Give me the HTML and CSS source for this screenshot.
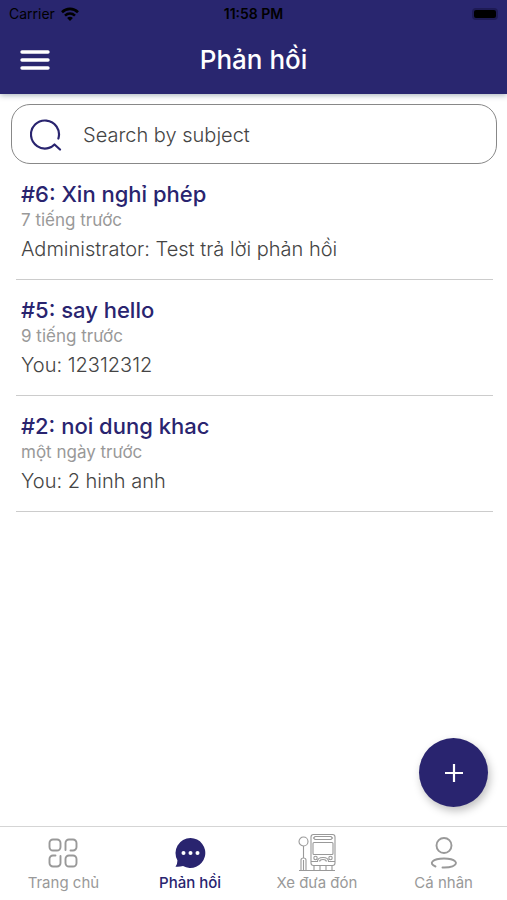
FILE: index.html
```html
<!DOCTYPE html>
<html lang="vi">
<head>
<meta charset="utf-8">
<meta name="viewport" content="width=device-width, initial-scale=1">
<title>Phản hồi</title>
<link rel="stylesheet" href="styles.css">
</head>
<body>
<header class="header">
  <div class="status">
    <span class="carrier">Carrier
      <svg width="18" height="14" viewBox="0 0 18 14" fill="none" stroke="#000" stroke-width="2.6" aria-hidden="true"><path d="M1 5.2C5.5.8 12.500.8 17 5.200M4 8.600c3-2.700 7-2.700 10 0"/><path d="M9 14L6.100 10.900c1.700-1.400 4.100-1.400 5.800 0z" fill="#000" stroke="none"/></svg>
    </span>
    <span class="clock">11:58 PM</span>
    <span class="battery"></span>
  </div>
  <div class="nav">
    <button class="menu" aria-label="Menu">
      <svg width="30" height="22" viewBox="0 0 30 22" stroke="#fff" stroke-width="3.400" stroke-linecap="round" aria-hidden="true"><path d="M2 3h26M2 11h26M2 19h26"/></svg>
    </button>
    <h1 class="title">Phản hồi</h1>
  </div>
</header>
<main class="content">
  <label class="search">
    <svg width="32" height="32" viewBox="0 0 32 32" fill="none" stroke="#29246f" stroke-width="2.200" stroke-linecap="round" stroke-linejoin="round" aria-hidden="true"><path d="M28.400 19.500A14 14 0 1 0 19 28.900Q22 28 24.500 25.500L30 30.500"/></svg>
    <input class="search-input" type="text" placeholder="Search by subject" aria-label="Search by subject">
  </label>
  <ul class="list">
    <li class="item">
      <h2 class="subject">#6: Xin nghỉ phép</h2>
      <p class="time">7 tiếng trước</p>
      <p class="message">Administrator: Test trả lời phản hồi</p>
    </li>
    <li class="item">
      <h2 class="subject">#5: say hello</h2>
      <p class="time">9 tiếng trước</p>
      <p class="message">You: 12312312</p>
    </li>
    <li class="item">
      <h2 class="subject">#2: noi dung khac</h2>
      <p class="time">một ngày trước</p>
      <p class="message">You: 2 hinh anh</p>
    </li>
  </ul>
</main>
<button class="add" aria-label="Thêm">
  <svg width="18" height="18" viewBox="0 0 18 18" stroke="#fff" stroke-width="2.200" aria-hidden="true"><path d="M9 0v18M0 9h18"/></svg>
</button>
<nav class="tabs">
  <a class="tab" href="#home">
    <svg width="40" height="40" viewBox="0 0 40 40" fill="none" stroke="#999" stroke-width="1.900" stroke-linecap="round" aria-hidden="true"><rect x="6.500" y="6.500" width="11" height="11" rx="3.500"/><path d="M22.500 17V10a3.500 3.500 0 0 1 3.500-3.500h4a3.500 3.500 0 0 1 3.500 3.500v4a3.500 3.500 0 0 1-3.500 3.500h-2.500"/><path d="M17.500 23v7a3.500 3.500 0 0 1-3.500 3.500h-4a3.500 3.500 0 0 1-3.500-3.500v-4a3.500 3.500 0 0 1 3.500-3.500h2.500"/><rect x="22.500" y="22.500" width="11" height="11" rx="3.500"/></svg>
    <span>Trang chủ</span>
  </a>
  <a class="tab active" href="#feedback" aria-current="page">
    <svg width="40" height="40" viewBox="0 0 40 40" fill="#29246f" aria-hidden="true"><path d="M20.500 5A15 15 0 1 1 13 33.100Q9.800 34 5.500 33.700Q7.500 31.500 7.400 27.300A15 15 0 0 1 20.500 5z"/><g fill="#fff"><circle cx="13.500" cy="20" r="2"/><circle cx="20.500" cy="20" r="2"/><circle cx="27.500" cy="20" r="2"/></g></svg>
    <span>Phản hồi</span>
  </a>
  <a class="tab" href="#bus">
    <svg width="40" height="40" viewBox="0 0 40 40" fill="none" stroke="#999" stroke-width="1.100" aria-hidden="true"><circle cx="6.500" cy="8.500" r="4.500"/><path d="M6.500 13v12M4 37V27q0-2 2.500-2t2.500 2v10M6.500 27v10M2 37.500h36"/><rect x="14" y="1.500" width="24" height="31" rx="2.500"/><path d="M17 9.500h18q1 0 1 1v10q0 1-1 1H17q-1 0-1-1v-10q0-1 1-1zM18 3.500h16l1.500 1.500L34 6.500H18L16.500 5zM14 28.500h6.500q0-4 5.500-4t5.500 4H38M22.500 28.500q.500-2 3.500-2t3.500 2M17 32.500v5M23 32.500v5M29 32.500v5M35 32.500v5"/><circle cx="18.500" cy="25" r="1.700"/><circle cx="33.500" cy="25" r="1.700"/></svg>
    <span>Xe đưa đón</span>
  </a>
  <a class="tab" href="#profile">
    <svg width="40" height="40" viewBox="0 0 40 40" fill="none" stroke="#999" stroke-width="1.900" stroke-linecap="round" aria-hidden="true"><circle cx="20" cy="12.500" r="7.500"/><path d="M11.500 33.500C4 30.500 8.500 25.500 20 25.500s15.500 5 8.500 7.800Q25 34.700 18.500 34.500"/></svg>
    <span>Cá nhân</span>
  </a>
</nav>
</body>
</html>
```
FILE: styles.css
```css
* { box-sizing: border-box; }

body {
  margin: 0;
  min-height: 100vh;
  display: flex;
  flex-direction: column;
  background: #fff;
  font-family: Inter, "Liberation Sans", sans-serif;
  color: #444;
}

h1, h2, p, ul { margin: 0; padding: 0; }
button { border: 0; padding: 0; cursor: pointer; }
svg { display: block; flex: none; }

.header {
  background: #29266f;
  color: #fff;
  box-shadow: 0 1px 6px rgba(20, 50, 70, 0.4);
}

.status {
  display: grid;
  grid-template-columns: 1fr auto 1fr;
  align-items: center;
  height: 27px;
  padding: 0 9px;
  color: #000;
  font-size: 14px;
}

.carrier { display: flex; align-items: center; gap: 6px; }
.clock { font-weight: 600; }

.battery {
  justify-self: end;
  width: 26px;
  height: 12px;
  border: 2px solid #1e1b55;
  border-radius: 4px;
  background: #000;
}

.nav {
  display: grid;
  grid-template-columns: 1fr auto 1fr;
  align-items: center;
  height: 67px;
  padding: 0 20px 2px;
}

.menu { justify-self: start; background: none; }
.title { font-size: 26px; font-weight: 500; line-height: 32px; }

.content { flex: 1; padding: 10px 10px 0; }

.search {
  display: flex;
  align-items: center;
  gap: 21px;
  height: 60px;
  margin-left: 1px;
  padding: 2px 18px 0;
  border: 1px solid #888;
  border-radius: 19px;
}

.search-input {
  flex: 1;
  min-width: 0;
  border: 0;
  padding: 0;
  outline: none;
  background: none;
  font: 300 20px/28px Inter, "Liberation Sans", sans-serif;
  color: #444;
}

.search-input::placeholder { color: #444; opacity: 1; }

.list { list-style: none; padding: 0 4px 0 6px; }
.item { padding: 15px 5px 13px; border-bottom: 1px solid #ccc; }
.subject { font-size: 22px; font-weight: 500; line-height: 30px; color: #29246f; }
.time { font-size: 17px; font-weight: 400; line-height: 22px; color: #999; }
.message { padding-top: 1px; font-size: 20px; font-weight: 300; line-height: 34px; }

.add {
  position: fixed;
  right: 19px;
  bottom: 93px;
  width: 69px;
  height: 69px;
  border-radius: 50%;
  display: grid;
  place-items: center;
  background: #29246f;
  box-shadow: 2px 4px 8px rgba(0, 0, 0, 0.25);
}

.tabs {
  display: grid;
  grid-template-columns: repeat(4, 1fr);
  height: 74px;
  padding-top: 6px;
  border-top: 1px solid #d5d5d5;
}

.tab {
  display: flex;
  flex-direction: column;
  align-items: center;
  font-size: 15px;
  line-height: 20px;
  color: #999;
  text-decoration: none;
}

.tab.active { color: #29246f; font-weight: 500; }
```
